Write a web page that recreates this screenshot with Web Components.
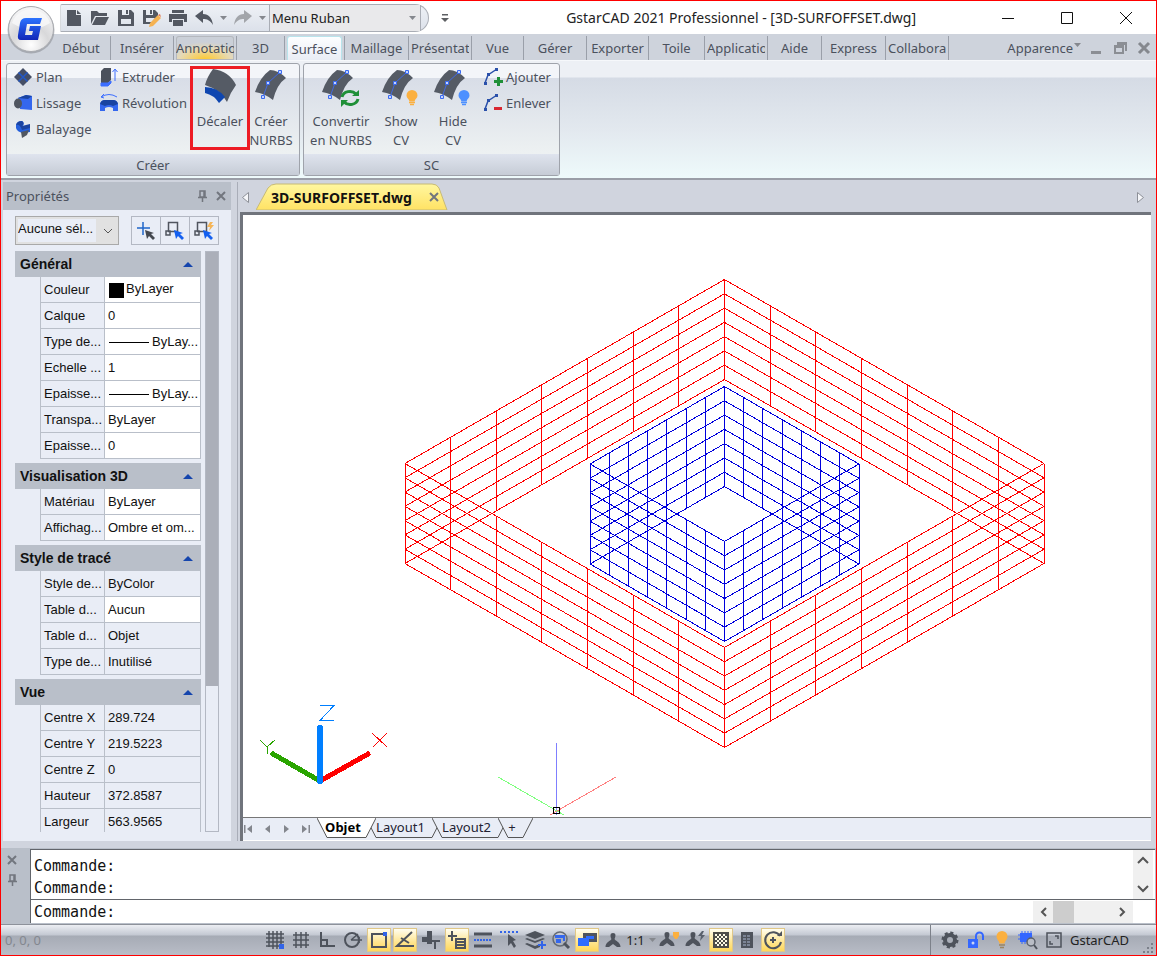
<!DOCTYPE html>
<html lang="fr">
<head>
<meta charset="utf-8">
<meta name="viewport" content="width=device-width, initial-scale=1">
<title>GstarCAD 2021 Professionnel - [3D-SURFOFFSET.dwg]</title>
<style>
  html, body {
    margin: 0;
  }

  body {
    font-family: "Noto Sans", "Open Sans", sans-serif;
    font-size: 13px;
    color: #4b515d;
  }
</style>
</head>
<body>
<cad-app></cad-app>

<script>
const curved = `
  <path d="M1 23 Q6 8 16 1 Q24 1 32 9 Q23 15 19 31 Q10 24 1 23z" fill="#555b65"/>
  <path d="M9 28 L14 14 L26 3" fill="none" stroke="#4169e0"/>
  <path d="M7.500 26.500h3v3h-3z M12.500 12.500h3v3h-3z M24.500 1.500h3v3h-3z" fill="#c5d3ff" stroke="#3a6bf0"/>`;

const bulb = (color) => `
  <path d="M31 21a5.500 5.500 0 0 1 5.500 5.500c0 2.500-2.500 3.500-3 6h-5c-.5-2.500-3-3.500-3-6A5.500 5.500 0 0 1 31 21z" fill="${color}"/>
  <path d="M28 33.500h6M29 35.500h4" stroke="${color}" stroke-width="1.500"/>`;

const person = '<path d="M8 1c3 0 3 3 1.500 6 1 2 6 3 6 8H12l-4-3-4 3H.5c0-5 5-6 6-8C5 4 5 1 8 1z" fill="#4e535c"/>';

// name: [width, height, markup]
const icons = {
  file: [16, 16, '<path d="M1 0h9v5h5v11H1z M11 0l4 4h-4z" fill="#535862"/>'],
  open: [18, 16, '<path d="M0 14V1h6l2 2h8v3H4z M5 7h13l-4 8H1z" fill="#535862"/>'],
  save: [16, 16, '<path d="M0 0h4v5h7V0h2l3 3v13H0z M3 9v5h10V9z M8 0h2v4H8z" fill="#535862" fill-rule="evenodd"/>'],
  saveas: [18, 18, '<path d="M0 1h3v5h7V1h2l3 3v4l-7 7H0z M3 9v4h6l3-4z M7 1h2v4H7z" fill="#535862" fill-rule="evenodd"/><path d="M7 14l8-8 3 3-8 8-4 1z" fill="#f5b252"/><path d="M15 6l2-1 1 3z" fill="#e0714f"/>'],
  print: [18, 16, '<path d="M3 0h12v3H3z M0 4h18v8h-3V9H3v3H0z M4 10h10v6H4z" fill="#535862"/>'],
  undo: [18, 16, '<path d="M0 6l8-6v4c6 0 9 4 10 11-3-5-6-6-10-6v4z" fill="#535862"/>'],
  redo: [18, 16, '<path d="M18 6l-8-6v4C4 4 1 8 0 15c3-5 6-6 10-6v4z" fill="#a2a5aa"/>'],
  caret: [7, 4, '<path d="M0 0h7L3.500 4z" fill="#85888e"/>'],
  custom: [8, 10, '<path d="M1 1h6v1.500H1z M0 5h8L4 9z" fill="#5d5f63"/>'],
  logo: [50, 50, `
    <defs>
      <radialGradient id="g" cx=".5" cy=".85" r=".8"><stop offset="0" stop-color="#fff"/><stop offset=".5" stop-color="#d8d8da"/><stop offset="1" stop-color="#f4f4f5"/></radialGradient>
      <linearGradient id="b" x2="0" y2="1"><stop offset="0" stop-color="#2d73ff"/><stop offset="1" stop-color="#1227b8"/></linearGradient>
    </defs>
    <circle cx="25" cy="26" r="23.500" fill="#8c8f96" opacity=".6"/>
    <circle cx="25" cy="25" r="22.500" fill="url(#g)" stroke="#a9abb0"/>
    <path d="M6 19Q25 31 44 19A20 20 0 0 0 6 19z" fill="#f9f9fa" opacity=".8"/>
    <path d="M20 14h16l-2 6H21l-2 11h7l1-4h-4l1-5h11l-3 14H15q-4 0-3-5l2-12q1-5 6-5z" fill="url(#b)"/>`],
  plan: [18, 18, '<path d="M9 0l9 9-9 9-9-9z" fill="#454e66"/><path d="M4.500 4.500l9 9M13.500 4.500l-9 9" stroke="#2358c7" stroke-width="1.500"/>'],
  lissage: [18, 16, '<path d="M4 3L12 0l6 1v14L6 14z" fill="#3467ee"/><path d="M4 3L12 0l6 1-4 3z" fill="#1943a1"/><ellipse cx="4" cy="8.500" rx="4" ry="5" fill="#505661"/>'],
  balayage: [18, 18, '<path d="M2 5Q3 1 8 1Q11 3 9 6L16 6V12L9 13Q3 12 2 8z" fill="#245fdb"/><path d="M2 5Q3 1 8 1Q11 3 8 6L16 4V8L8 10Q6 4 2 5z" fill="#1943a1"/><path d="M7 12l8-2-2 5-5 3z" fill="#505661"/>'],
  extruder: [18, 18, '<path d="M1 3l3-3h7v12l-3 3H1z" fill="#4b515c"/><path d="M1 15h7l3-2v2l-3 3H1z M15 2v11" fill="#3d6eff" stroke="#3d6eff"/><path d="M12.500 4L15 1l2.500 3" fill="none" stroke="#3d6eff"/>'],
  revolution: [20, 18, '<path d="M1 10Q2 6 6 6H14Q18 6 19 10V17H14V14Q10 12 6 14V17H1z" fill="#3467ee"/><path d="M1 10Q2 6 6 6H14Q18 6 19 10L14 12Q10 10 6 12z" fill="#1943a1"/><path d="M2 3Q10-2 18 3M5 0L2 3l3 1" fill="none" stroke="#3d6eff"/>'],
  decaler: [34, 34, '<path d="M10 0Q26 2 33 16Q27 24 24 33Q18 21 2 16Q4 8 10 0z" fill="#555b65"/><path d="M2 18Q14 18 22 28L16 34Q11 26 2 24z" fill="#0e46b0"/>'],
  nurbs: [34, 34, curved],
  convertir: [40, 38, curved + '<path d="M21 28a8 7 0 0 1 14-3M37 30a8 7 0 0 1-14 3" fill="none" stroke="#1f9038" stroke-width="3"/><path d="M31 27h7v-6z M27 31h-7v7z" fill="#1f9038"/>'],
  show: [40, 38, curved + bulb('#fbb040')],
  hide: [40, 38, curved + bulb('#4d90ff')],
  ajouter: [18, 18, '<path d="M1 15L4 7L13 1" fill="none" stroke="#2a50aa" stroke-width="1.500"/><path d="M0 14h3v3H0z M3 5h3v3H3z M11 0h3v3h-3z" fill="#2a50aa"/><path d="M10 12h3V9h3v3h3v3h-3v3h-3v-3h-3z" fill="#1f9038"/>'],
  enlever: [18, 18, '<path d="M1 15L4 7L13 1" fill="none" stroke="#2a50aa" stroke-width="1.500"/><path d="M0 14h3v3H0z M3 5h3v3H3z M11 0h3v3h-3z" fill="#2a50aa"/><path d="M10 13h8v3h-8z" fill="#d92730"/>'],
  pin: [9, 12, '<path d="M2 1h5v6H2z M0 7.500h9 M4.500 7v5 M6 1v6" fill="none" stroke="#72767e" stroke-width="1.500"/>'],
  close: [10, 10, '<path d="M1 1l8 8M9 1l-8 8" stroke="#72767e" stroke-width="2"/>'],
  pick: [20, 20, '<path d="M7 1v13M1 7h13" stroke="#1f66c9" stroke-width="1.500"/><path d="M9 9l9 3-3 1 4 4-2 2-4-4-2 3z" fill="#44484f"/>'],
  pickbox: [20, 20, '<path d="M3.500 1.500h9v9h-9z M1 10h4v4H1z" fill="none" stroke="#50555f" stroke-width="1.500"/><path d="M9 9l9 3-3 1 4 4-2 2-4-4-2 3z" fill="#1460f0"/>'],
  quick: [20, 20, '<path d="M3.500 1.500h9v9h-9z M1 10h4v4H1z" fill="none" stroke="#50555f" stroke-width="1.500"/><path d="M9 9l9 3-3 1 4 4-2 2-4-4-2 3z" fill="#1460f0"/><path d="M16 1l-3 5h3l-1 4 5-6h-3l2-3z" fill="#f5b558"/>'],
  chevron: [10, 6, '<path d="M1 1l4 4 4-4" fill="none" stroke="#555"/>'],
  up: [12, 7, '<path d="M1 6l5-5 5 5" fill="none" stroke="#555" stroke-width="2"/>'],
  down: [12, 7, '<path d="M1 1l5 5 5-5" fill="none" stroke="#555" stroke-width="2"/>'],
  left: [7, 10, '<path d="M6 1L2 5l4 4" fill="none" stroke="#555" stroke-width="2"/>'],
  right: [7, 10, '<path d="M1 1l4 4-4 4" fill="none" stroke="#555" stroke-width="2"/>'],
  prevtab: [7, 11, '<path d="M6.500.500v10l-6-5z" fill="#f5f6f9" stroke="#8d9098"/>'],
  nexttab: [7, 11, '<path d="M.500.500v10l6-5z" fill="#f5f6f9" stroke="#8d9098"/>'],
  first: [9, 8, '<path d="M0 0h1.500v8H0z M8 0v8L3 4z" fill="#83868d"/>'],
  previous: [9, 8, '<path d="M7 0v8L2 4z" fill="#83868d"/>'],
  next: [9, 8, '<path d="M2 0v8l5-4z" fill="#83868d"/>'],
  last: [9, 8, '<path d="M1 0v8l5-4z M7.500 0H9v8H7.500z" fill="#83868d"/>'],
  minimize: [12, 12, '<path d="M0 6.500h12" stroke="#111"/>'],
  maximize: [12, 12, '<path d="M.500.500h11v11H.500z" fill="none" stroke="#111"/>'],
  quit: [12, 12, '<path d="M0 0l12 12M12 0L0 12" stroke="#111"/>'],
  childmin: [12, 12, '<path d="M1 9h10v3H1z" fill="#8b8e94"/>'],
  childrestore: [12, 12, '<path d="M3 0h10v9h-2V3H3z M0 3h10v9H0z M2 6v4h6V6z" fill="#8b8e94" fill-rule="evenodd"/>'],
  childclose: [12, 12, '<path d="M1 1l10 10M11 1L1 11" stroke="#85888e" stroke-width="3"/>'],
  snap: [18, 18, '<path d="M3 0v16M7 0v18M11 0v18M15 0v16M0 3h18M0 7h18M0 11h18M0 15h16" stroke="#4e535c" stroke-width="1.500"/><path d="M13 13h5v5h-5z" fill="#3264e8"/>'],
  grid: [18, 18, '<path d="M4 1v16M9 1v16M14 1v16M1 4h16M1 9h16M1 14h16" stroke="#4e535c" stroke-width="1.500"/>'],
  ortho: [18, 18, '<path d="M3 1v14h14M3 9h6v6" fill="none" stroke="#4e535c" stroke-width="2"/>'],
  polar: [20, 18, '<circle cx="9" cy="9" r="7" fill="none" stroke="#4e535c" stroke-width="2"/><path d="M8 9h11M8 9l7-6M16 6v6" stroke="#4e535c" stroke-width="1.500"/>'],
  osnap: [18, 18, '<path d="M2 3h14v13H2z" fill="none" stroke="#4e535c" stroke-width="2"/><path d="M13 1h4v4h-4z" fill="#3264e8"/>'],
  otrack: [18, 18, '<path d="M16 1L1 15h17M5 7l8 5" fill="none" stroke="#4e535c" stroke-width="2"/>'],
  ducs: [18, 18, '<path d="M5 0h5v13H5z M0 6h10v5H0z" fill="#4e535c"/><path d="M10 10h8M13 10v8" stroke="#4e535c" stroke-width="2"/>'],
  dyn: [18, 18, '<path d="M4 0v10M0 5h9" stroke="#4e535c" stroke-width="2"/><path d="M7 7h11v11H7z M9 9v1h7V9z M9 12v1h7v-1z M9 15v1h7v-1z" fill="#4e535c" fill-rule="evenodd"/>'],
  weight: [18, 18, '<path d="M0 3h18M0 15h18" stroke="#4e535c" stroke-width="3"/><path d="M0 9h18" stroke="#3264e8" stroke-width="2" stroke-dasharray="2 1"/>'],
  cycle: [18, 18, '<path d="M0 1h18" stroke="#3264e8" stroke-width="2" stroke-dasharray="2 2"/><path d="M8 3l8 6-3 1 3 5-2 2-3-5-3 3z" fill="#4e535c"/>'],
  layers: [20, 18, '<path d="M0 4l10-4 10 4-10 4z M0 8l2-1 8 3 8-3 2 1-10 4z M0 13l2-1 8 3 5-2v3l-5 2z" fill="#4e535c"/><path d="M16 10h2v3h3v2h-3v3h-2v-3h-3v-2h3z" fill="#3264e8"/>'],
  zoom: [18, 18, '<circle cx="8" cy="8" r="7" fill="none" stroke="#656a73" stroke-width="1.500"/><path d="M12 12l5 5" stroke="#4e535c" stroke-width="3"/><path d="M3 4h10v6h-2V7H3z M4 8h5v4H4z" fill="#3467ee"/>'],
  hardware: [20, 18, '<path d="M6 2h14v9H6z" fill="#4e535c"/><path d="M9 5h8v3H9z" fill="#2f6cff"/><path d="M1 7h11v8H1z" fill="#2f6cff"/>'],
  person: [16, 16, person],
  personbulb: [20, 18, person + '<path d="M14 1h6v4l-2 3h-2l-2-3z" fill="#fbb040"/>'],
  personflash: [20, 18, person + '<path d="M17 0l-4 5h3l-1 5 5-6h-3l2-4z" fill="#59616d"/>'],
  checker: [18, 18, '<path d="M1 1h16v16H1z" fill="#4e4d49"/><path d="M3 4h12M3 8h12M3 12h12" stroke="#fffbe4" stroke-width="2" stroke-dasharray="2 2"/><path d="M5 6h10M5 10h10M5 14h10" stroke="#fffbe4" stroke-width="2" stroke-dasharray="2 2"/>'],
  sheet: [16, 18, '<path d="M2 1h12v16H2z" fill="#4e535c"/><path d="M4 5h8M4 8h8M4 11h8M4 14h8" stroke="#a9b6ce" stroke-dasharray="3 1"/>'],
  refresh: [20, 18, '<path d="M17 5a8 8 0 1 0 1 6" fill="none" stroke="#4e535c" stroke-width="2"/><path d="M14 5h5V0z" fill="#4e535c"/><path d="M10 6v6M7 9h6" stroke="#4e535c" stroke-width="2"/>'],
  gear: [18, 18, '<circle cx="9" cy="9" r="5" fill="none" stroke="#4e535c" stroke-width="4"/><circle cx="9" cy="9" r="7" fill="none" stroke="#4e535c" stroke-width="3" stroke-dasharray="3 2.500"/>'],
  unlock: [18, 18, '<path d="M1 8h10v9H1z" fill="#3467ff"/><path d="M9 8V5a3 3 0 0 1 7 0v4" fill="none" stroke="#3467ff" stroke-width="2"/><circle cx="6" cy="12" r="1.500" fill="#c9d4f5"/>'],
  lamp: [16, 18, '<path d="M8 0a5.500 5.500 0 0 1 5.500 5.500c0 3-2.500 4-3 7h-5c-.5-3-3-4-3-7A5.500 5.500 0 0 1 8 0z" fill="#fbb040"/><path d="M5 14h6M6 16.500h4" stroke="#9c8561" stroke-width="1.500"/>'],
  inspect: [20, 18, '<path d="M2 2h12v9H2z" fill="#3467ff"/><path d="M4 0v13M7 0v13M10 0v13M13 0v7M0 4h5M0 8h5" stroke="#3467ff"/><circle cx="13" cy="11" r="4" fill="#b9bdc6" stroke="#5c616b" stroke-width="1.500"/><path d="M16 14l3 4" stroke="#4e535c" stroke-width="2"/>'],
  full: [16, 16, '<path d="M1 1h14v14H1z" fill="none" stroke="#4e535c" stroke-width="1.500"/><path d="M9 4h3v3M4 9v3h3" fill="none" stroke="#4e535c" stroke-width="1.500"/>'],
  grip: [10, 10, '<path d="M8 0h2v2H8z M4 4h2v2H4z M8 4h2v2H8z M0 8h2v2H0z M4 8h2v2H4z M8 8h2v2H8z" fill="#7b808a"/>'],
};

const reset = `
  * { box-sizing: border-box; }
  button, input, select {
    margin: 0;
    padding: 0;
    border: 0;
    background: none;
    font: inherit;
    color: inherit;
  }
  button {
    display: flex;
    align-items: center;
    justify-content: center;
  }
`;

class BaseElement extends HTMLElement {
  connectedCallback() {
    if (this.shadowRoot) return;
    this.attachShadow({ mode: 'open' });
    const elem = document.createElement('template');
    elem.innerHTML = `<style>${reset}</style>` + this.render();
    this.shadowRoot.append(elem.content);
  }
}

class CadIcon extends BaseElement {
  render() {
    const [w, h, body] = icons[this.getAttribute('name')];
    return `
      <style>
        :host { display: inline-flex; flex: none; }
        svg { display: block; overflow: visible; }
      </style>
      <svg width="${w}" height="${h}" viewBox="0 0 ${w} ${h}" aria-hidden="true">${body}</svg>`;
  }
}

class QuickAccess extends BaseElement {
  render() {
    const tools = [['file', 'Nouveau'], ['open', 'Ouvrir'], ['save', 'Enregistrer'], ['saveas', 'Enregistrer sous'], ['print', 'Imprimer'], ['undo', 'Annuler']];
    return `
      <style>
        :host { display: flex; align-items: center; gap: 12px; }
        .bar {
          display: flex;
          height: 28px;
          border: 1px solid #a9adb5;
          border-left-color: #d7dade;
          border-radius: 2px 14px 14px 0;
          background: linear-gradient(#eef1f6, #dce1ea);
        }
        .bar > button { width: 26px; }
        .bar > .small { width: 13px; }
        .combo {
          display: flex;
          align-items: center;
          width: 152px;
          margin-right: 7px;
          border: solid #a9adb5;
          border-width: 0 1px;
          background: #e9e9eb;
        }
        select { flex: 1; appearance: none; padding-left: 2px; color: #222; }
        .combo cad-icon { margin-right: 4px; }
      </style>
      <div class="bar">
        ${tools.map(([n, t]) => `<button aria-label="${t}"><cad-icon name="${n}"></cad-icon></button>`).join('')}
        <button class="small" aria-label="Liste annuler"><cad-icon name="caret"></cad-icon></button>
        <button aria-label="Rétablir"><cad-icon name="redo"></cad-icon></button>
        <button class="small" aria-label="Liste rétablir"><cad-icon name="caret"></cad-icon></button>
        <div class="combo">
          <select aria-label="Espace de travail"><option>Menu Ruban</option></select>
          <cad-icon name="caret"></cad-icon>
        </div>
      </div>
      <button aria-label="Personnaliser"><cad-icon name="custom"></cad-icon></button>`;
  }
}

class TitleBar extends BaseElement {
  render() {
    return `
      <style>
        :host { display: flex; align-items: center; height: 33px; }
        h1 { flex: 1; margin: 0; padding-right: 62px; text-align: right; font-size: 14px; font-weight: 400; color: #222; white-space: nowrap; }
        .window { display: flex; padding-right: 1px; }
        .window button { width: 59px; height: 32px; }
      </style>
      <quick-access></quick-access>
      <h1>GstarCAD 2021 Professionnel - [3D-SURFOFFSET.dwg]</h1>
      <div class="window">
        <button aria-label="Réduire"><cad-icon name="minimize"></cad-icon></button>
        <button aria-label="Agrandir"><cad-icon name="maximize"></cad-icon></button>
        <button aria-label="Fermer"><cad-icon name="quit"></cad-icon></button>
      </div>`;
  }
}

class RibbonTabs extends BaseElement {
  render() {
    const tabs = [
      ['Début', 51, 'start'], ['Insérer', 63], ['Annotatio', 63, 'hot'], ['3D', 48], ['Surface', 60, 'active'],
      ['Maillage', 64], ['Présentat', 63], ['Vue', 52], ['Gérer', 63], ['Exporter', 62],
      ['Toile', 56], ['Applicatio', 63], ['Aide', 54], ['Express', 64], ['Collabora', 63],
    ];
    return `
      <style>
        :host { display: flex; height: 26px; padding-top: 2px; }
        nav { display: flex; flex: 1; }
        .tab { display: flex; padding: 0 2px; border-right: 1px solid #9a9fa9; }
        .start { padding: 0 8px 0 0; }
        .tab button {
          display: block;
          width: 100%;
          overflow: hidden;
          text-align: center;
          white-space: nowrap;
          border-radius: 3px 3px 0 0;
        }
        .hot button { background: radial-gradient(ellipse 40px 18px at bottom, #ffc928, #e6d9b6 65%, #cbd0d8); box-shadow: inset 0 0 0 1px #b5b8be; }
        .active button { background: linear-gradient(#fdfeff, #e9edf5); border: 1px solid #b9e4ec; border-bottom: 0; }
        .side { display: flex; align-items: center; gap: 12px; padding-right: 6px; }
        .look { gap: 1px; margin-right: -3px; }
        .look cad-icon { margin-bottom: 6px; }
      </style>
      <nav>
        ${tabs.map(([t, w, c]) => `<div class="tab ${c || ''}" style="width:${w}px"><button>${t}</button></div>`).join('')}
      </nav>
      <div class="side">
        <button class="look">Apparence<cad-icon name="caret"></cad-icon></button>
        <button aria-label="Réduire le dessin"><cad-icon name="childmin"></cad-icon></button>
        <button aria-label="Restaurer le dessin"><cad-icon name="childrestore"></cad-icon></button>
        <button aria-label="Fermer le dessin"><cad-icon name="childclose"></cad-icon></button>
      </div>`;
  }
}

class AppHeader extends BaseElement {
  render() {
    return `
      <style>
        :host {
          display: grid;
          grid-template-columns: 59px 1fr;
          background: linear-gradient(#fff 33px, #ced3dc 33px);
        }
        .logo { grid-row: 1 / 3; padding-bottom: 4px; }
      </style>
      <button class="logo" aria-label="Menu GstarCAD"><cad-icon name="logo"></cad-icon></button>
      <title-bar></title-bar>
      <ribbon-tabs></ribbon-tabs>`;
  }
}

class RibbonPanel extends BaseElement {
  render() {
    return `
      <style>
        :host {
          display: flex;
          flex-direction: column;
          height: 113px;
          border: 1px solid #9fa3ab;
          border-radius: 3px;
          background: linear-gradient(#f3f5f9 14px, #d8dde7 14px, #edf1f2 80%);
        }
        .tools { display: flex; flex: 1; padding-left: 7px; }
        h2 {
          margin: 0;
          height: 21px;
          text-align: center;
          font-size: 13px;
          font-weight: 400;
          line-height: 22px;
          background: linear-gradient(#dfe4ee, #c6ccd6);
        }
      </style>
      <div class="tools"><slot></slot></div>
      <h2>${this.getAttribute('label')}</h2>`;
  }
}

class RibbonButton extends BaseElement {
  render() {
    return `
      <style>
        :host { display: block; }
        button { gap: 4px; height: 26px; line-height: 26px; white-space: nowrap; }
        :host([large]) button {
          flex-direction: column;
          justify-content: flex-start;
          gap: 0;
          width: 100%;
          height: 84px;
          margin-top: 2px;
          padding-top: 3px;
          line-height: 19px;
        }
        .icon { display: flex; align-items: center; justify-content: center; width: 18px; }
        :host([large]) .icon { width: 40px; height: 38px; margin-bottom: 5px; align-items: flex-start; }
        :host([marked]) button { border: 3px solid #ed1c24; padding-top: 0; }
      </style>
      <button>
        <span class="icon"><cad-icon name="${this.getAttribute('icon')}"></cad-icon></span>
        <span><slot></slot></span>
      </button>`;
  }
}

class RibbonBar extends BaseElement {
  render() {
    return `
      <style>
        :host {
          display: flex;
          gap: 4px;
          height: 120px;
          padding: 2px 5px;
          border-top: 1px solid #f6f8fb;
          border-bottom: 2px solid #9a9ea7;
          background: linear-gradient(#edf0f5 16px, #d5dbe5 17px, #e3e9ef 60%, #eefafb);
        }
        .create { width: 294px; }
        .sc { width: 257px; margin-left: -1px; }
        .first { width: 86px; }
        .second { width: 90px; }
        .w60 { width: 60px; }
        .w44 { width: 44px; margin-left: -1px; }
        .w68 { width: 68px; margin-left: -4px; }
        .w52 { width: 52px; }
        .last { margin-left: 5px; }
      </style>
      <ribbon-panel class="create" label="Créer">
        <div class="first">
          <ribbon-button icon="plan">Plan</ribbon-button>
          <ribbon-button icon="lissage">Lissage</ribbon-button>
          <ribbon-button icon="balayage">Balayage</ribbon-button>
        </div>
        <div class="second">
          <ribbon-button icon="extruder">Extruder</ribbon-button>
          <ribbon-button icon="revolution">Révolution</ribbon-button>
        </div>
        <ribbon-button class="w60" large marked icon="decaler">Décaler</ribbon-button>
        <ribbon-button class="w44" large icon="nurbs">Créer<br>NURBS</ribbon-button>
      </ribbon-panel>
      <ribbon-panel class="sc" label="SC">
        <ribbon-button class="w68" large icon="convertir">Convertir<br>en NURBS</ribbon-button>
        <ribbon-button class="w52" large icon="show">Show<br>CV</ribbon-button>
        <ribbon-button class="w52" large icon="hide">Hide<br>CV</ribbon-button>
        <div class="last">
          <ribbon-button icon="ajouter">Ajouter</ribbon-button>
          <ribbon-button icon="enlever">Enlever</ribbon-button>
        </div>
      </ribbon-panel>`;
  }
}

class PropertyGroup extends BaseElement {
  render() {
    const rows = JSON.parse(this.getAttribute('rows'));
    // kind: w = editable, s = colour swatch, l = line sample, empty = read only
    const cell = (value, kind) => {
      if (kind === 's') return `<i class="swatch"></i>${value}`;
      if (kind === 'l') return `<i class="line"></i>${value}`;
      return value;
    };
    return `
      <style>
        :host { display: block; flex: none; }
        button {
          width: 100%;
          height: 26px;
          justify-content: space-between;
          padding: 0 8px 0 5px;
          background: #b9bfc9;
          font-size: 14px;
          font-weight: 700;
        }
        button::after { content: ""; border: 5px solid transparent; border-top: 0; border-bottom-color: #1545ad; }
        table { width: 161px; margin-left: 25px; table-layout: fixed; border-spacing: 0; }
        th, td {
          height: 26px;
          padding: 0 0 0 3px;
          border: solid #b9bfc9;
          border-width: 0 1px 1px 0;
          text-align: left;
          font-weight: 400;
          white-space: nowrap;
          overflow: hidden;
        }
        th { width: 65px; border-left-width: 1px; }
        .edit { background: #fff; }
        .swatch, .line { display: inline-block; vertical-align: middle; }
        .swatch { width: 15px; height: 15px; margin: 0 2px 0 1px; background: #000; }
        .line { width: 40px; height: 1px; margin: 0 3px 0 1px; background: #000; }
      </style>
      <button>${this.getAttribute('label')}</button>
      <table>
        ${rows.map(([n, v, k]) => `<tr><th scope="row">${n}</th><td class="${k ? 'edit' : ''}">${cell(v, k)}</td></tr>`).join('')}
      </table>`;
  }
}

class PropertiesPanel extends BaseElement {
  render() {
    const groups = [
      ['Général', [['Couleur', 'ByLayer', 's'], ['Calque', '0', 'w'], ['Type de...', 'ByLay...', 'l'], ['Echelle ...', '1', 'w'],
        ['Epaisse...', 'ByLay...', 'l'], ['Transpa...', 'ByLayer', 'w'], ['Epaisse...', '0', 'w']]],
      ['Visualisation 3D', [['Matériau', 'ByLayer', 'w'], ['Affichag...', 'Ombre et om...', 'w']]],
      ['Style de tracé', [['Style de...', 'ByColor'], ['Table d...', 'Aucun', 'w'], ['Table d...', 'Objet'], ['Type de...', 'Inutilisé']]],
      ['Vue', [['Centre X', '289.724'], ['Centre Y', '219.5223'], ['Centre Z', '0'], ['Hauteur', '372.8587'], ['Largeur', '563.9565']]],
    ];
    return `
      <style>
        :host { display: flex; flex-direction: column; width: 228px; background: #e9edf6; }
        header {
          display: flex;
          align-items: center;
          gap: 9px;
          height: 28px;
          padding: 0 5px 0 3px;
          background: #b9bfc9;
        }
        h2 { flex: 1; margin: 0; font-size: 13px; font-weight: 400; }
        .body { padding: 6px 12px 0; font-family: "Liberation Sans", Arial, sans-serif; color: #111; }
        .top { display: flex; justify-content: space-between; margin-bottom: 6px; }
        .combo {
          display: flex;
          align-items: center;
          width: 104px;
          height: 29px;
          padding-right: 5px;
          border: 1px solid #a9a9a9;
          background: #e1e1e1;
        }
        select { flex: 1; min-width: 0; height: 23px; margin: 0 7px 0 2px; padding-bottom: 4px; appearance: none; background: #e9edf6; }
        .picks { display: flex; }
        .picks button { width: 30px; height: 29px; margin-left: -1px; border: 1px solid #b3b8c3; }
        .scroll { display: flex; justify-content: space-between; height: 581px; }
        .list { display: flex; flex-direction: column; gap: 4px; width: 186px; overflow: hidden; }
        .bar { width: 14px; border: 1px solid #b3b8c3; }
        .thumb { height: 75%; background: #abafb9; }
      </style>
      <header>
        <h2>Propriétés</h2>
        <button aria-label="Épingler"><cad-icon name="pin"></cad-icon></button>
        <button aria-label="Fermer"><cad-icon name="close"></cad-icon></button>
      </header>
      <div class="body">
        <div class="top">
          <div class="combo">
            <select aria-label="Sélection"><option>Aucune sél...</option></select>
            <cad-icon name="chevron"></cad-icon>
          </div>
          <div class="picks">
            <button aria-label="Ajouter à la sélection"><cad-icon name="pick"></cad-icon></button>
            <button aria-label="Sélectionner"><cad-icon name="pickbox"></cad-icon></button>
            <button aria-label="Sélection rapide"><cad-icon name="quick"></cad-icon></button>
          </div>
        </div>
        <div class="scroll">
          <div class="list">
            ${groups.map(([t, r]) => `<property-group label="${t}" rows='${JSON.stringify(r)}'></property-group>`).join('')}
          </div>
          <div class="bar"><div class="thumb"></div></div>
        </div>
      </div>`;
  }
}

class DrawingCanvas extends BaseElement {
  // One wireframe box: four walls seen from above, each cut in 7 by 7
  wireframe(cx, cy, dx, dy, color) {
    const h = 100;
    const n = 7;
    const corners = [[cx - dx, cy], [cx, cy - dy], [cx + dx, cy], [cx, cy + dy]];
    let d = '';
    corners.forEach(([x1, y1], i) => {
      const [x2, y2] = corners[(i + 1) % 4];
      for (let k = 0; k <= n; k++) {
        const t = k / n;
        const x = x1 + (x2 - x1) * t;
        const y = y1 + (y2 - y1) * t;
        d += `M${x} ${y}V${y + h}M${x1} ${y1 + h * t}L${x2} ${y2 + h * t}`;
      }
    });
    return `<path d="${d}" fill="none" stroke="${color}"/>`;
  }

  render() {
    return `
      <style>
        :host { display: block; flex: 1; min-height: 600px; background: #fff; contain: size; }
        svg { display: block; width: 100%; height: 100%; }
      </style>
      <svg viewBox="243 215 908 602" shape-rendering="crispEdges" role="img" aria-label="Dessin 3D">
        ${this.wireframe(724.5, 463.5, 319.5, 184, '#f00')}
        ${this.wireframe(724.5, 464, 134.5, 77.5, '#00d')}
        <g fill="none" stroke-width="5" stroke-linecap="round">
          <path d="M320 781L273 754" stroke="#2aa500"/>
          <path d="M320 781L368 754" stroke="#f00"/>
          <path d="M320 781V728" stroke="#007fff" stroke-width="6"/>
        </g>
        <g fill="none">
          <path d="M320 705.500H334L320 720.500H334" stroke="#007fff"/>
          <path d="M260 740l7 7 8-7M267.500 747v7" stroke="#2aa500"/>
          <path d="M372 733l15 14M387 733l-14 14" stroke="#f00"/>
          <path d="M556.500 743v72" stroke="#7f7fff"/>
          <path d="M498 777l66 38" stroke="#7fff7f"/>
          <path d="M616 777l-66 38" stroke="#ff7f7f"/>
          <path d="M553.500 807.500h6v6h-6z" stroke="#000"/>
        </g>
      </svg>`;
  }
}

class LayoutTabs extends BaseElement {
  render() {
    const tabs = [['Objet', 59, 'on'], ['Layout1', 76], ['Layout2', 76], ['+', 35]];
    // Each tab hangs from the line above it: wide at the top, narrow at the bottom
    const shape = (w, on) => `
      <svg width="${w}" height="22" aria-hidden="true">
        <path d="M0 0L10 19.500H${w - 10}L${w} 0" fill="${on ? '#fff' : '#e9edf6'}" stroke="#555"/>
      </svg>`;
    return `
      <style>
        :host { display: flex; height: 23px; border-top: 1px solid #777; background: #e9edf6; color: #223; }
        .moves { display: flex; align-items: center; gap: 10px; width: 74px; padding-left: 1px; }
        .tab { display: grid; place-items: center; margin-right: -10px; }
        .tab > * { grid-area: 1 / 1; }
        .tab span { padding: 0 7px 4px 0; }
        .on { color: #000; font-weight: 700; z-index: 1; }
        svg { display: block; }
      </style>
      <div class="moves">
        ${['first', 'previous', 'next', 'last'].map((n) => `<button aria-label="${n}"><cad-icon name="${n}"></cad-icon></button>`).join('')}
      </div>
      ${tabs.map(([t, w, on]) => `<button class="tab ${on || ''}">${shape(w, on)}<span>${t}</span></button>`).join('')}`;
  }
}

class DocumentArea extends BaseElement {
  render() {
    return `
      <style>
        :host {
          display: flex;
          flex-direction: column;
          flex: 1;
          min-width: 0;
          padding-right: 5px;
          background: #d0d4de;
          border-left: 1px solid #a9adb8;
        }
        .tabs { display: flex; justify-content: space-between; align-items: center; height: 30px; padding: 0 7px 0 4px; }
        .left { display: flex; align-items: center; gap: 7px; align-self: stretch; }
        .doc { display: grid; align-items: center; height: 30px; }
        .doc > * { grid-area: 1 / 1; }
        .doc svg { display: block; align-self: start; }
        .name { display: flex; align-items: center; justify-content: space-between; padding: 0 9px 0 15px; }
        .name span { font-size: 14px; font-weight: 700; color: #111; }
        .frame { display: flex; flex: 1; flex-direction: column; margin-left: 2px; border: solid #70747c; border-width: 3px 0 0 3px; }
        .sheet { display: flex; flex: 1; flex-direction: column; border-bottom: 1px solid #fff; }
      </style>
      <div class="tabs">
        <div class="left">
          <button aria-label="Précédent"><cad-icon name="prevtab"></cad-icon></button>
          <div class="doc">
            <svg width="192" height="28" aria-hidden="true">
              <defs><linearGradient id="y" x2="0" y2="1"><stop stop-color="#fff7a0"/><stop offset="1" stop-color="#ffe264"/></linearGradient></defs>
              <path d="M0 28L12 6Q15 2 20 2H176Q181 2 183 6L191 28z" fill="url(#y)" stroke="#c7ba76"/>
            </svg>
            <div class="name">
              <span>3D-SURFOFFSET.dwg</span>
              <button aria-label="Fermer 3D-SURFOFFSET.dwg"><cad-icon name="close"></cad-icon></button>
            </div>
          </div>
        </div>
        <button aria-label="Suivant"><cad-icon name="nexttab"></cad-icon></button>
      </div>
      <div class="frame">
        <div class="sheet">
          <drawing-canvas></drawing-canvas>
          <layout-tabs></layout-tabs>
        </div>
      </div>`;
  }
}

class CommandLine extends BaseElement {
  render() {
    return `
      <style>
        :host { display: flex; height: 76px; padding: 1px 1px 1px 2px; background: #b9bfc9; }
        .side { display: flex; flex-direction: column; gap: 9px; width: 27px; padding: 6px 0 0 3px; align-items: flex-start; }
        .side button { width: 12px; }
        .box {
          display: flex;
          flex-direction: column;
          flex: 1;
          border: solid #62656b;
          border-width: 1px 0 0 1px;
          background: #fff;
          font-family: "DejaVu Sans Mono", monospace;
          font-size: 15px;
          line-height: 22px;
          color: #111;
        }
        .history { display: flex; height: 50px; border-bottom: 1px solid #62656b; }
        .log { flex: 1; padding: 5px 0 0 3px; }
        .log div { height: 22px; }
        .vertical { display: flex; flex-direction: column; justify-content: space-between; width: 20px; margin-right: 2px; padding: 7px 4px; background: #f0f0f0; }
        .entry { display: flex; flex: 1; padding: 1px 0 0 3px; }
        label { display: flex; flex: 1; }
        input { flex: 1; outline: 0; }
        .horizontal { display: flex; align-items: center; width: 100px; margin-right: 22px; padding-right: 1px; background: #f0f0f0; }
        .horizontal button { width: 20px; }
        .horizontal i { width: 21px; height: 100%; margin-right: auto; background: #cdcdcd; }
      </style>
      <div class="side">
        <button aria-label="Fermer"><cad-icon name="close"></cad-icon></button>
        <button aria-label="Épingler"><cad-icon name="pin"></cad-icon></button>
      </div>
      <div class="box">
        <div class="history">
          <div class="log"><div>Commande:</div><div>Commande:</div></div>
          <div class="vertical">
            <button aria-label="Monter"><cad-icon name="up"></cad-icon></button>
            <button aria-label="Descendre"><cad-icon name="down"></cad-icon></button>
          </div>
        </div>
        <div class="entry">
          <label>Commande:<input type="text"></label>
          <div class="horizontal">
            <button aria-label="Gauche"><cad-icon name="left"></cad-icon></button>
            <i></i>
            <button aria-label="Droite"><cad-icon name="right"></cad-icon></button>
          </div>
        </div>
      </div>`;
  }
}

class StatusBar extends BaseElement {
  render() {
    const button = (n, on) => `<button class="${on ? 'on' : ''}" aria-label="${n}"><cad-icon name="${n}"></cad-icon></button>`;
    // A star marks the toggles that are switched on
    const toggles = ['snap', 'grid', 'ortho', 'polar', '*osnap', '*otrack', 'ducs', '*dyn', 'weight', 'cycle', 'layers', 'zoom', '*hardware', 'person'];
    const scale = ['personbulb', 'personflash', '*checker', 'sheet', '*refresh'];
    const list = (names) => names.map((n) => button(n.replace('*', ''), n[0] === '*')).join('');
    return `
      <style>
        :host {
          display: flex;
          align-items: center;
          height: 31px;
          border-top: 1px solid #8d919a;
          background: linear-gradient(#eceef3, #c3c8d2 10px, #a6abb5 11px, #b9bdc7);
        }
        .coords { width: 262px; padding-left: 4px; color: #83878f; }
        .tools { display: flex; align-items: center; flex: 1; gap: 2px; }
        .tools button { width: 24px; height: 24px; }
        .tools .on { border: 1px solid #e0c787; background: linear-gradient(#fffdf0, #ffe58f 60%, #ffd75a); }
        .tools .scale { width: 28px; gap: 4px; color: #222; }
        .end { display: flex; align-items: center; height: 100%; gap: 2px; padding: 0 3px 0 7px; border-left: 1px solid #7d818a; color: #222; }
        .end button { width: 24px; }
        .grip { align-self: flex-end; margin: 0 0 2px 12px; }
        .end span { margin-left: 2px; }
      </style>
      <div class="coords">0, 0, 0</div>
      <div class="tools">
        ${list(toggles)}
        <button class="scale">1:1<cad-icon name="caret"></cad-icon></button>
        ${list(scale)}
      </div>
      <div class="end">
        ${list(['gear', 'unlock', 'lamp', 'inspect', 'full'])}
        <span>GstarCAD</span>
        <cad-icon class="grip" name="grip"></cad-icon>
      </div>`;
  }
}

class CadApp extends BaseElement {
  render() {
    return `
      <style>
        :host {
          display: flex;
          flex-direction: column;
          min-height: 100vh;
          box-sizing: border-box;
          border: 1px solid #f00;
          background: #ced3dc;
        }
        main { display: flex; flex: 1; gap: 6px; padding: 2px 0 7px 2px; background: #d0d4de; }
      </style>
      <app-header></app-header>
      <ribbon-bar></ribbon-bar>
      <main>
        <properties-panel></properties-panel>
        <document-area></document-area>
      </main>
      <command-line></command-line>
      <status-bar></status-bar>`;
  }
}

customElements.define('cad-icon', CadIcon);
customElements.define('quick-access', QuickAccess);
customElements.define('title-bar', TitleBar);
customElements.define('ribbon-tabs', RibbonTabs);
customElements.define('app-header', AppHeader);
customElements.define('ribbon-panel', RibbonPanel);
customElements.define('ribbon-button', RibbonButton);
customElements.define('ribbon-bar', RibbonBar);
customElements.define('property-group', PropertyGroup);
customElements.define('properties-panel', PropertiesPanel);
customElements.define('drawing-canvas', DrawingCanvas);
customElements.define('layout-tabs', LayoutTabs);
customElements.define('document-area', DocumentArea);
customElements.define('command-line', CommandLine);
customElements.define('status-bar', StatusBar);
customElements.define('cad-app', CadApp);
</script>
</body>
</html>
